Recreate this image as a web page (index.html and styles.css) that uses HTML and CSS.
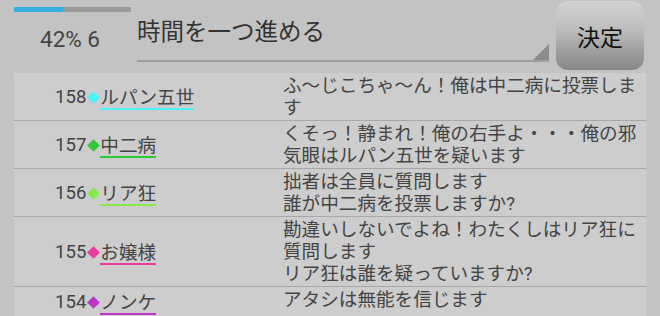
FILE: index.html
```html
<!DOCTYPE html>
<html lang="ja">
<head>
    <meta charset="UTF-8">
    <title>投票ログ</title>
    <link rel="stylesheet" href="styles.css">
</head>
<body>
    <div class="top-bar">
        <div class="status">
            <div class="progress"><div class="progress-fill" style="width: 42%"></div></div>
            <div class="status-text">42% 6</div>
        </div>
        <div class="select">
            <span class="select-text">時間を一つ進める</span>
            <span class="select-arrow"></span>
        </div>
        <button class="btn-decide">決定</button>
    </div>

    <div class="log">
        <div class="log-row">
            <div class="who">158<span class="mark c-cyan"></span><span class="name u-cyan">ルパン五世</span></div>
            <div class="msg">ふ～じこちゃ～ん！俺は中二病に投票します</div>
        </div>
        <div class="log-row">
            <div class="who">157<span class="mark c-green"></span><span class="name u-green">中二病</span></div>
            <div class="msg">くそっ！静まれ！俺の右手よ・・・俺の邪気眼はルパン五世を疑います</div>
        </div>
        <div class="log-row">
            <div class="who">156<span class="mark c-lime"></span><span class="name u-lime">リア狂</span></div>
            <div class="msg">拙者は全員に質問します<br>誰が中二病を投票しますか?</div>
        </div>
        <div class="log-row">
            <div class="who">155<span class="mark c-pink"></span><span class="name u-pink">お嬢様</span></div>
            <div class="msg">勘違いしないでよね！わたくしはリア狂に質問します<br>リア狂は誰を疑っていますか?</div>
        </div>
        <div class="log-row">
            <div class="who">154<span class="mark c-purple"></span><span class="name u-purple">ノンケ</span></div>
            <div class="msg">アタシは無能を信じます</div>
        </div>
    </div>
</body>
</html>
```

FILE: styles.css
```css
* {
    margin: 0;
    padding: 0;
    box-sizing: border-box;
}

body {
    font-family: Roboto, "Noto Sans CJK JP", sans-serif;
    background: #c3c3c3;
    color: #444;
    overflow: hidden;
}

/* верхняя панель */
.top-bar {
    display: flex;
    height: 73px;
}

.status {
    width: 137px;
    padding: 7px 0 0 14px;
}

.progress {
    width: 117px;
    height: 5px;
    background: #9a9a9a;
}

.progress-fill {
    height: 100%;
    background: #3aaee0;
}

.status-text {
    margin-top: 13px;
    padding-left: 26px;
    font-size: 22.5px;
    line-height: 28px;
    color: #444;
}

.select {
    position: relative;
    width: 412px;
    height: 48px;
    margin-top: 14px;
    border-bottom: 2px solid #9e9e9e;
}

.select-text {
    display: block;
    font-size: 23.5px;
    line-height: 36px;
    color: #333;
}

.select-arrow {
    position: absolute;
    right: 0;
    bottom: 0;
    width: 0;
    height: 0;
    border-left: 16px solid transparent;
    border-bottom: 16px solid #8c8c8c;
}

.btn-decide {
    width: 88px;
    height: 69px;
    margin: 1px 0 0 7px;
    border: none;
    border-radius: 12px;
    background: linear-gradient(#d2d2d2, #bdbdbd 40%, #878787);
    font-family: "Noto Sans CJK JP", sans-serif;
    font-size: 23px;
    color: #111;
}

/* лог */
.log {
    margin: 0 14px;
    background: #cdcdcd;
}

.log-row {
    display: grid;
    grid-template-columns: 269px 1fr;
    padding: 2px 0 1px;
    border-bottom: 1px solid #a8a8a8;
    font-size: 18.6px;
    line-height: 22px;
}

.who {
    display: flex;
    align-items: center;
    padding-left: 41px;
}

.mark {
    display: inline-block;
    width: 9px;
    height: 9px;
    margin: 0 2px 0 3px;
    transform: rotate(45deg);
}

.name {
    display: inline-block;
    line-height: 20px;
    padding-top: 4px;
    border-bottom: 2px solid;
}

.msg {
    padding-right: 6px;
}

.c-cyan { background: #4cf2fa; }
.c-green { background: #33c83a; }
.c-lime { background: #86e84a; }
.c-pink { background: #ec3a9e; }
.c-purple { background: #be36c8; }

.u-cyan { border-color: #4cf2fa; }
.u-green { border-color: #33c83a; }
.u-lime { border-color: #86e84a; }
.u-pink { border-color: #ec3a9e; }
.u-purple { border-color: #be36c8; }
```
